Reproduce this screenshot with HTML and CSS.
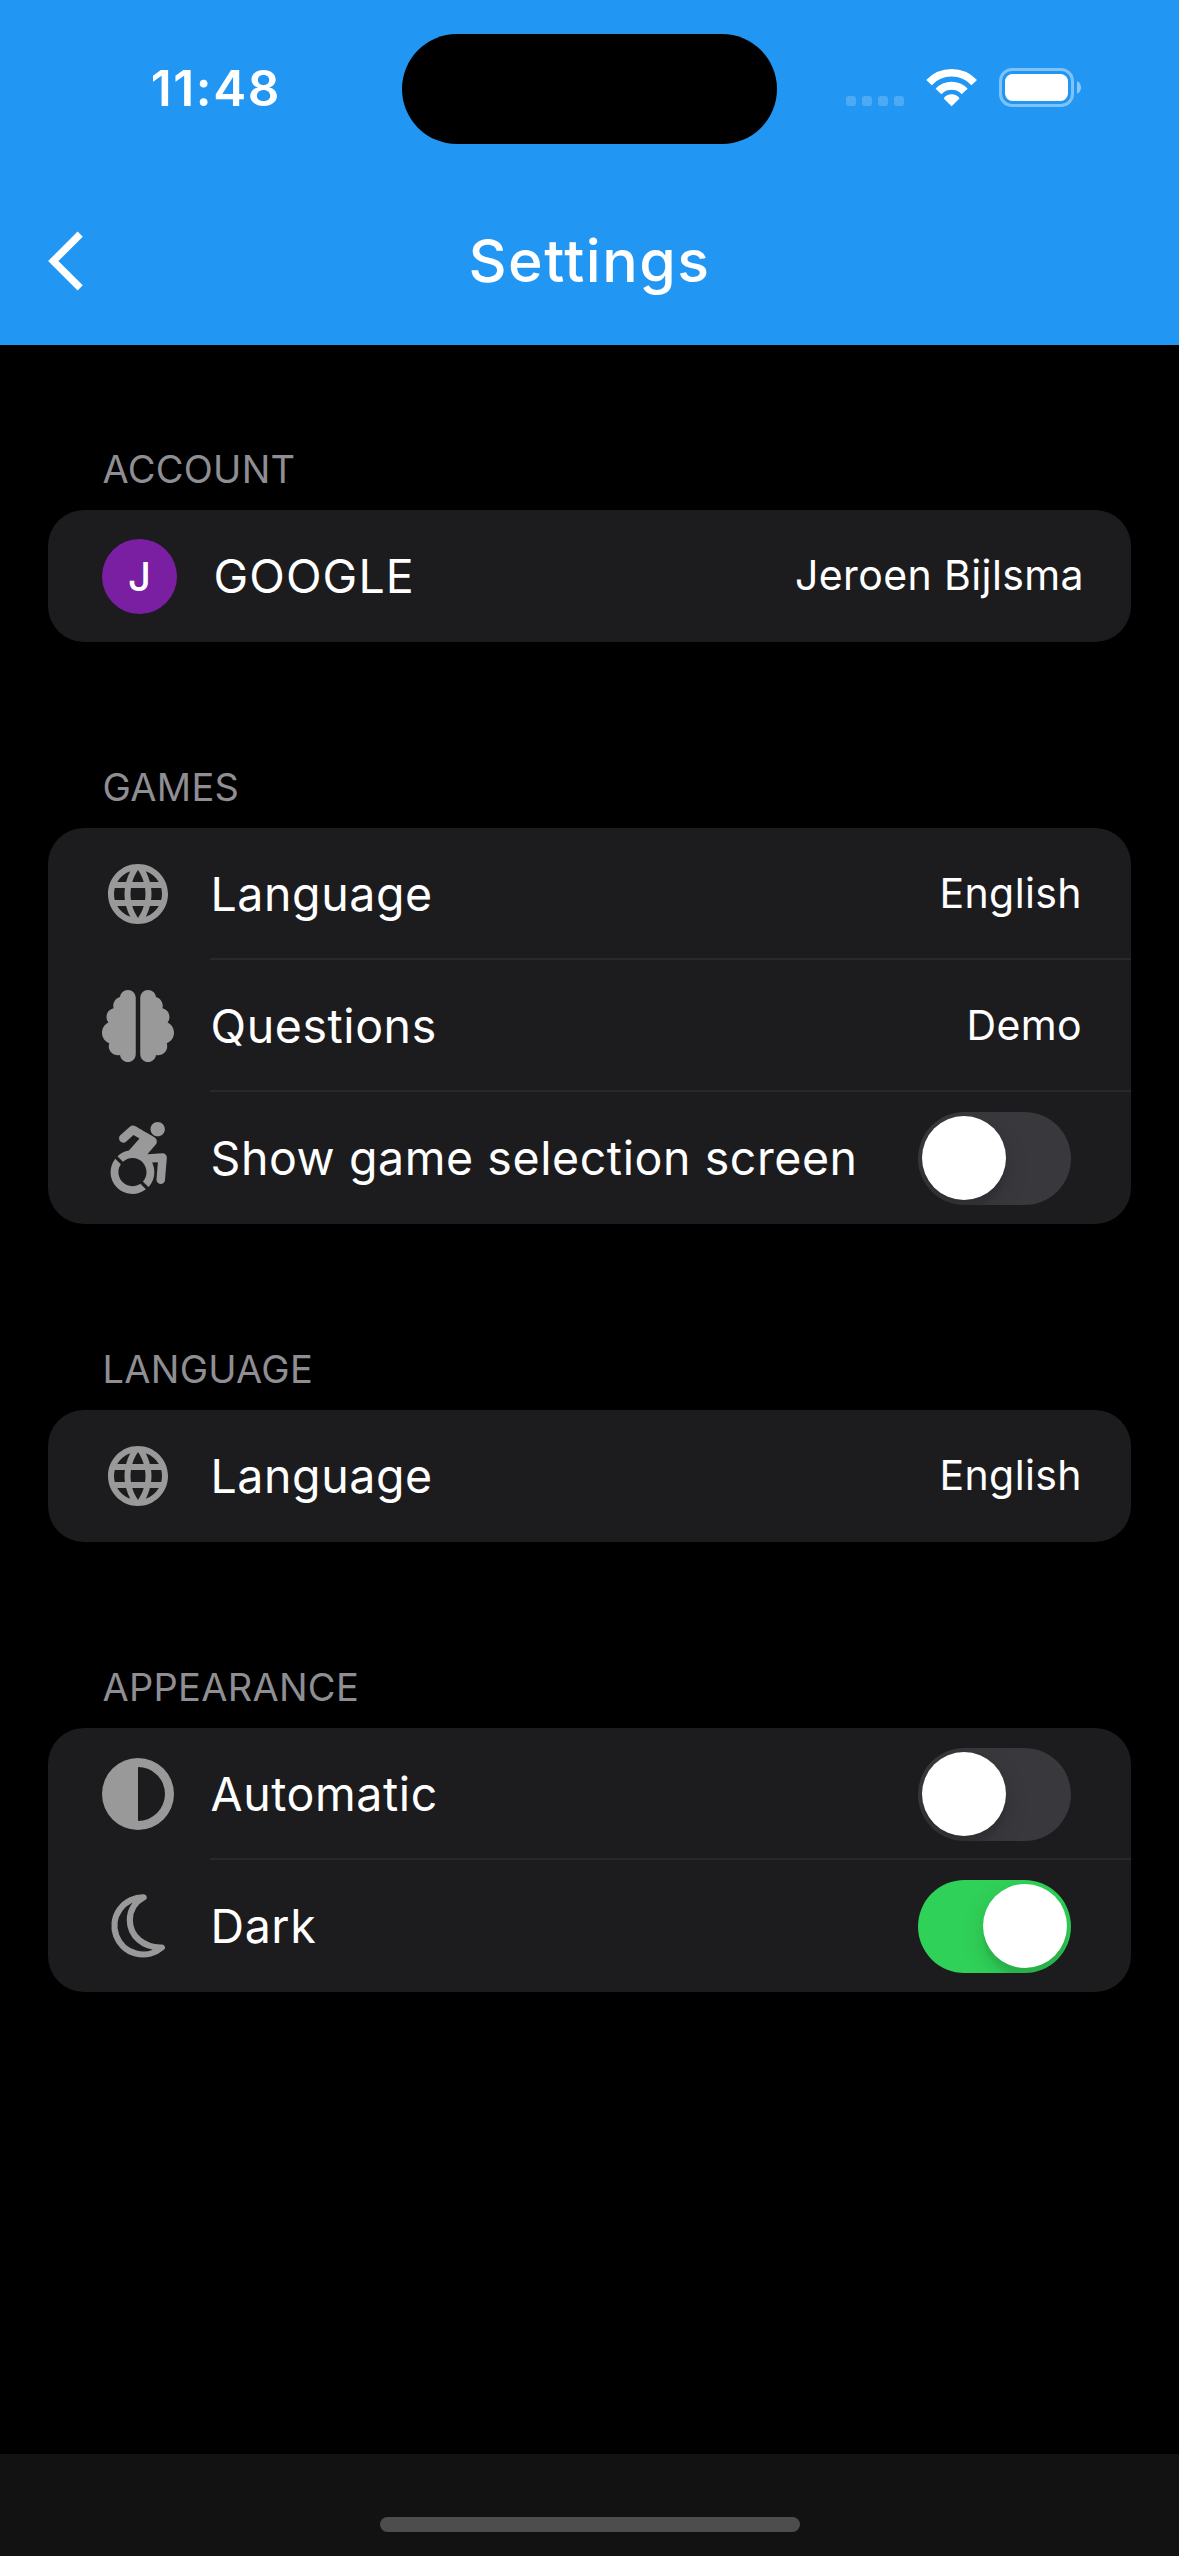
FILE: index.html
```html
<!DOCTYPE html>
<html lang="en">
<head>
<meta charset="utf-8">
<title>Settings</title>
<link rel="stylesheet" href="styles.css">
</head>
<body>
<svg class="sprite" aria-hidden="true">
  <symbol id="globe" viewBox="0 0 24 24">
    <path d="M11.99 2C6.47 2 2 6.48 2 12s4.47 10 9.99 10C17.52 22 22 17.52 22 12S17.52 2 11.99 2zm6.93 6h-2.95c-.32-1.25-.78-2.45-1.38-3.56 1.84.63 3.37 1.91 4.33 3.56zM12 4.04c.83 1.2 1.48 2.53 1.91 3.96h-3.82c.43-1.43 1.08-2.76 1.91-3.96zM4.26 14C4.1 13.36 4 12.69 4 12s.1-1.36.26-2h3.38c-.08.66-.14 1.32-.14 2 0 .68.06 1.34.14 2H4.26zm.82 2h2.95c.32 1.25.78 2.45 1.38 3.56-1.84-.63-3.37-1.9-4.33-3.56zm2.95-8H5.08c.96-1.66 2.49-2.93 4.33-3.56C8.81 5.55 8.35 6.75 8.03 8zM12 19.96c-.83-1.2-1.48-2.53-1.91-3.96h3.82c-.43 1.43-1.08 2.76-1.91 3.96zM14.34 14H9.66c-.09-.66-.16-1.32-.16-2 0-.68.07-1.35.16-2h4.68c.09.65.16 1.32.16 2 0 .68-.07 1.34-.16 2zm.25 5.56c.6-1.11 1.06-2.31 1.38-3.56h2.95c-.96 1.65-2.49 2.93-4.33 3.56zM16.36 14c.08-.66.14-1.32.14-2 0-.68-.06-1.34-.14-2h3.38c.16.64.26 1.31.26 2s-.1 1.36-.26 2h-3.38z"/>
  </symbol>
</svg>

<header class="header">
  <div class="status">
    <div class="time">11:48</div>
    <div class="island"></div>
    <div class="indicators">
      <svg class="cellular" viewBox="0 0 58 10">
        <rect width="10" height="10" rx="3"/><rect x="16" width="10" height="10" rx="3"/><rect x="32" width="10" height="10" rx="3"/><rect x="48" width="10" height="10" rx="3"/>
      </svg>
      <svg class="wifi" viewBox="0 0 52 39">
        <g fill="none" stroke="#fff">
          <path stroke-width="7.6" d="M3 14.6A31 31 0 0 1 48.2 14.6"/>
          <path stroke-width="8" d="M12.5 23.4A18 18 0 0 1 38.7 23.4"/>
        </g>
        <path fill="#fff" d="M17.7 30.4A9.6 9.6 0 0 1 33.5 30.4L25.6 38.3Z"/>
      </svg>
      <svg class="battery" viewBox="0 0 83 39">
        <rect x="1.5" y="1.5" width="72" height="36" rx="11.5" fill="none" stroke="#fff" stroke-opacity=".42" stroke-width="3"/>
        <rect x="6" y="6" width="63" height="27" rx="7.5" fill="#fff"/>
        <path fill="#fff" fill-opacity=".48" d="M78 13.2C80.6 14.3 82 16.7 82 19.5S80.6 24.7 78 25.8Z"/>
      </svg>
    </div>
  </div>
  <nav class="nav">
    <svg class="back" viewBox="0 0 36 60"><path d="M32.2 3.2L5.3 30L32.2 56.8" fill="none" stroke="#fff" stroke-width="7.3"/></svg>
    <h1 class="title">Settings</h1>
    <span></span>
  </nav>
</header>

<main class="content">
  <section class="section">
    <h2 class="section-title">ACCOUNT</h2>
    <div class="card">
      <div class="row account">
        <div class="avatar">J</div>
        <div class="body"><span class="label">GOOGLE</span><span class="value">Jeroen Bijlsma</span></div>
      </div>
    </div>
  </section>

  <section class="section">
    <h2 class="section-title">GAMES</h2>
    <div class="card">
      <div class="row">
        <svg class="icon"><use href="#globe"/></svg>
        <div class="body"><span class="label">Language</span><span class="value">English</span></div>
      </div>
      <div class="row">
        <svg class="icon" viewBox="0 0 512 512"><path d="M184 0c30.9 0 56 25.1 56 56V456c0 30.9-25.1 56-56 56c-28.9 0-52.7-21.9-55.7-50.1c-5.2 1.4-10.7 2.1-16.3 2.1c-35.3 0-64-28.7-64-64c0-7.4 1.3-14.6 3.6-21.2C21.4 367.4 0 338.2 0 304c0-31.9 18.7-59.5 45.8-72.3C37.1 220.8 32 207 32 192c0-30.7 21.6-56.3 50.4-62.6C80.8 123.9 80 118 80 112c0-29.9 20.6-55.1 48.3-62.1C131.3 21.9 155.1 0 184 0zM328 0c28.9 0 52.6 21.9 55.7 49.9c27.8 7 48.3 32.1 48.3 62.1c0 6-.8 11.9-2.4 17.4c28.8 6.2 50.4 31.9 50.4 62.6c0 15-5.1 28.8-13.8 39.7C493.3 244.5 512 272.1 512 304c0 34.2-21.4 63.4-51.6 74.8c2.3 6.6 3.6 13.8 3.6 21.2c0 35.3-28.7 64-64 64c-5.6 0-11.1-.7-16.3-2.1c-3 28.2-26.8 50.1-55.7 50.1c-30.9 0-56-25.1-56-56V56c0-30.9 25.1-56 56-56z"/></svg>
        <div class="body"><span class="label">Questions</span><span class="value">Demo</span></div>
      </div>
      <div class="row">
        <svg class="icon" viewBox="-5 0 448 512"><path d="M423.9 255.8L411 413.1c-3.3 40.7-63.9 35.1-60.6-4.9l10-122.5-41.1 2.3c10.1 20.7 15.8 43.9 15.8 68.5 0 41.2-16.1 78.7-42.3 106.5l-39.3-39.3c57.9-63.7 13.1-167.2-74-167.2-25.9 0-49.5 9.9-67.2 26L73 243.2c22-20.7 50.1-35.1 81.4-40.2l75.3-85.7-42.6-24.8-51.6 46c-30 26.8-70.6-18.5-40.5-45.4l68-60.7c9.8-8.8 24.1-10.2 35.5-3.6 0 0 139.3 80.9 139.5 81.1 16.2 10.1 20.7 36 6.1 52.6L285.7 229l106.1-5.9c18.5-1.1 33.6 14.4 32.1 32.7zm-64.9-154c28.1 0 50.9-22.8 50.9-50.9C409.9 22.8 387.1 0 359 0c-28.1 0-50.9 22.8-50.9 50.9 0 28.1 22.8 50.9 50.9 50.9zM179.6 456.5c-80.6 0-127.4-90.6-82.7-156.1l-39.7-39.7C36.4 287 24 320.3 24 356.4c0 130.7 150.7 201.4 251.4 122.5l-39.7-39.7c-16 10.9-35.3 17.3-56.1 17.3z"/></svg>
        <div class="body"><span class="label">Show game selection screen</span><span class="toggle"><span class="knob"></span></span></div>
      </div>
    </div>
  </section>

  <section class="section">
    <h2 class="section-title">LANGUAGE</h2>
    <div class="card">
      <div class="row">
        <svg class="icon"><use href="#globe"/></svg>
        <div class="body"><span class="label">Language</span><span class="value">English</span></div>
      </div>
    </div>
  </section>

  <section class="section">
    <h2 class="section-title">APPEARANCE</h2>
    <div class="card">
      <div class="row">
        <svg class="icon" viewBox="0 0 72 72"><path fill-rule="evenodd" d="M36 0a36 36 0 1 0 0 72a36 36 0 1 0 0-72zM36 9a27 27 0 0 1 0 54z"/></svg>
        <div class="body"><span class="label">Automatic</span><span class="toggle"><span class="knob"></span></span></div>
      </div>
      <div class="row">
        <svg class="icon" viewBox="0 0 72 72"><path class="moon" d="M41.6 7.3A28.6 28.6 0 1 0 59.8 57.5C41.5 58 27.8 46 27.8 30C27.8 20.5 33 12 41.6 7.3Z"/></svg>
        <div class="body"><span class="label">Dark</span><span class="toggle on"><span class="knob"></span></span></div>
      </div>
    </div>
  </section>
</main>

<footer class="footer"><div class="home-indicator"></div></footer>
</body>
</html>
```
FILE: styles.css
```css
* { box-sizing: border-box; }

body {
  margin: 0;
  min-height: 2556px;
  display: flex;
  flex-direction: column;
  background: #000;
  color: #fff;
  font-family: Inter, "Liberation Sans", sans-serif;
}

svg { display: block; flex: none; }
.sprite { width: 0; height: 0; display: none; }

.header { height: 345px; background: #2196f3; }

.status {
  display: grid;
  grid-template-columns: 402px 375px 1fr;
  height: 177px;
  padding-top: 33px;
}

.time {
  height: 110px;
  padding-left: 150.7px;
  font-size: 49.5px;
  font-weight: 600;
  line-height: 110px;
  letter-spacing: 1.6px;
}

.island { height: 110px; margin-top: 1px; border-radius: 55px; background: #000; }

.indicators {
  display: flex;
  align-items: center;
  height: 109px;
  padding-left: 69px;
}

.cellular { width: 58px; height: 10px; margin-top: 27px; fill: #fff; fill-opacity: .2; }
.wifi { width: 52px; height: 39px; margin-left: 22px; }
.battery { width: 83px; height: 39px; margin-left: 21px; }

.nav {
  display: grid;
  grid-template-columns: 1fr auto 1fr;
  align-items: center;
  height: 168px;
}

.back { width: 36px; height: 60px; margin-left: 48px; }

.title {
  margin: 0;
  font-size: 59px;
  font-weight: 500;
  line-height: 70px;
  letter-spacing: 1.5px;
}

.content {
  flex: 1;
  display: flex;
  flex-direction: column;
  gap: 122px;
  padding: 101px 48px 0;
}

.section-title {
  margin: 0 0 18px;
  padding-left: 54.5px;
  color: #8e8e93;
  font-size: 38px;
  font-weight: 400;
  line-height: 46px;
  letter-spacing: .28px;
}

.card { border-radius: 36px; background: #1c1c1e; overflow: hidden; }

.row { display: flex; align-items: center; height: 132px; padding-left: 54px; }

.icon { width: 72px; height: 72px; margin-right: 36px; fill: #999; }

.moon { fill: none; stroke: #999; stroke-width: 6.2; stroke-linejoin: round; }

.avatar {
  width: 75px;
  height: 75px;
  margin: 0 36px 0 0;
  border-radius: 50%;
  background: #7b1fa2;
  font-size: 40px;
  font-weight: 500;
  line-height: 75px;
  text-align: center;
}

.body {
  flex: 1;
  display: flex;
  align-items: center;
  justify-content: space-between;
  height: 132px;
  padding-right: 49px;
}

.row:not(:last-child) .body { box-shadow: inset 0 -2px #29292b; }

.label { padding-left: .5px; font-size: 46.5px; letter-spacing: .58px; white-space: nowrap; }
.value { padding-bottom: 2px; font-size: 41px; letter-spacing: .4px; }

.account .body { padding-right: 47px; }
.account .label { letter-spacing: 1.1px; }

.toggle {
  width: 153px;
  height: 93px;
  margin-right: 11px;
  padding: 4.5px 4px;
  border-radius: 46.5px;
  background: #39393d;
  overflow: hidden;
}

.knob {
  display: block;
  width: 84px;
  height: 84px;
  border-radius: 50%;
  background: #fff;
  box-shadow: 0 9px 24px rgba(0, 0, 0, .15), 0 9px 3px rgba(0, 0, 0, .06);
}

.on { background: #30d158; }
.on .knob { margin-left: auto; }

.footer {
  display: flex;
  justify-content: center;
  height: 102px;
  padding-top: 63px;
  background: #121212;
}

.home-indicator { width: 420px; height: 15px; border-radius: 8px; background: #4d4d4d; }
```
